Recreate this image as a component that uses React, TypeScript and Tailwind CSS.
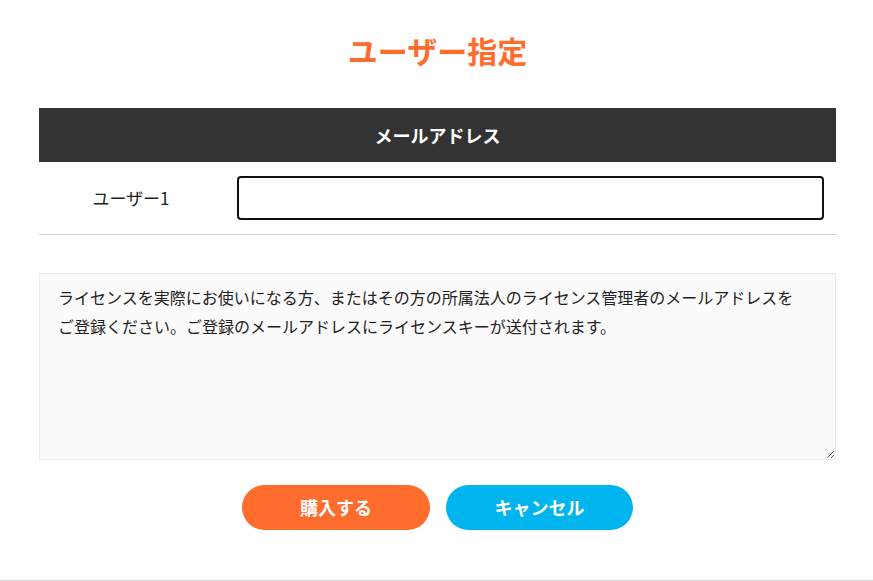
import React from "react";

const NOTE =
  "ライセンスを実際にお使いになる方、またはその方の所属法人のライセンス管理者のメールアドレスをご登録ください。ご登録のメールアドレスにライセンスキーが送付されます。";

const App: React.FC = () => {
  return (
    <div
      className="w-full bg-white text-[#222] border-b border-[#d9d9d9]"
      style={{ fontFamily: '"Noto Sans CJK JP", "Noto Sans", sans-serif' }}
    >
      <div className="pl-[39px] pr-[37px] pb-[50px]">
        {/* タイトル */}
        <h1 className="pt-[28px] mb-[35px] text-center text-[30px] leading-[45px] font-bold text-[#ff6d2e]">
          ユーザー指定
        </h1>

        {/* テーブル */}
        <div className="h-[54px] flex items-center justify-center bg-[#333333] text-white text-[18px] font-bold">
          メールアドレス
        </div>
        <div className="flex items-center py-[14px] border-b border-[#d4d4d4]">
          <label className="w-[184px] text-center text-[17px]">ユーザー1</label>
          <input
            type="text"
            autoFocus
            className="flex-1 ml-[14px] mr-[12px] h-[44px] px-[14px] border-2 border-[#111] rounded-[4px] outline-none text-[16px]"
          />
        </div>

        {/* 注意書き */}
        <textarea
          defaultValue={NOTE}
          className="mt-[38px] block w-full h-[187px] pt-[9px] pl-[18px] pr-[30px] bg-[#fbfbfb] border border-[#ececec] text-[16px] leading-[29px] text-[#222] outline-none"
        />

        {/* ボタン */}
        <div className="mt-[25px] flex justify-center gap-[16px]">
          <button className="w-[188px] h-[45px] rounded-full bg-[#ff6d2e] text-white text-[18px] font-bold">
            購入する
          </button>
          <button className="w-[187px] h-[45px] rounded-full bg-[#00b4ee] text-white text-[18px] font-bold">
            キャンセル
          </button>
        </div>
      </div>
    </div>
  );
};

export default App;
